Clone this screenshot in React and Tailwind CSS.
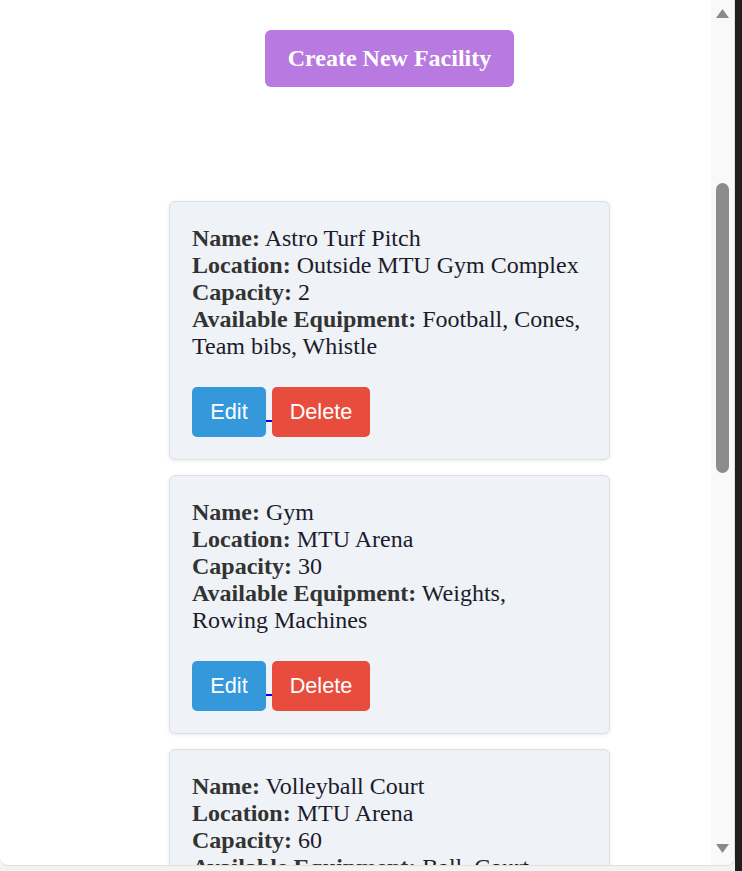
import React from "react";

const facilities = [
  { name: "Astro Turf Pitch", location: "Outside MTU Gym Complex", capacity: "2", equipment: "Football, Cones, Team bibs, Whistle" },
  { name: "Gym", location: "MTU Arena", capacity: "30", equipment: "Weights, Rowing Machines" },
  { name: "Volleyball Court", location: "MTU Arena", capacity: "60", equipment: "Ball, Court markers, Net" },
];

function Card({ f }) {
  return (
    <div className="w-[441px] shrink-0 rounded-[6px] border border-[#dcdfe4] bg-[#eff2f7] px-[22px] pt-[23px] pb-[22px] shadow-[0_1px_4px_rgba(0,0,0,0.08)]">
      <div className="text-[24px] leading-[27px] text-[#1b1b2b]" style={{ fontFamily: '"Liberation Serif", serif' }}>
        <div><strong className="text-[#333]">Name:</strong> {f.name}</div>
        <div><strong className="text-[#333]">Location:</strong> {f.location}</div>
        <div><strong className="text-[#333]">Capacity:</strong> {f.capacity}</div>
        <div><strong className="text-[#333]">Available Equipment:</strong> {f.equipment}</div>
      </div>
      <div className="mt-[27px] flex items-end" style={{ fontFamily: '"Liberation Sans", Arial, sans-serif' }}>
        <div className="flex h-[50px] w-[74px] items-center justify-center rounded-[5px] bg-[#3498db] text-[21.7px] text-white">Edit</div>
        <div className="mb-[15px] h-[2px] w-[6px] bg-[#0000ee]"></div>
        <div className="flex h-[50px] w-[98px] items-center justify-center rounded-[5px] bg-[#e74c3c] text-[21.7px] text-white">Delete</div>
      </div>
    </div>
  );
}

export default function App() {
  return (
    <div className="flex h-[871px] w-[742px] overflow-hidden bg-[#1f1f1f]">
      <div className="flex w-[735px] flex-col bg-[#f3f3f3]">
        <div className="flex h-[866px] overflow-hidden rounded-b-[8px] border-b border-r border-[#dedede] bg-white">
          <div className="flex w-[711px] flex-col items-center overflow-hidden pl-[68px] pt-[30px]">
            <div
              className="flex h-[57px] w-[249px] shrink-0 items-center justify-center rounded-[6px] bg-[#b879e0] pb-[2px] text-[24px] font-bold text-white"
              style={{ fontFamily: '"Liberation Serif", serif' }}
            >
              Create New Facility
            </div>
            <div className="mt-[114px] flex flex-col gap-[15px]">
              {facilities.map((f) => (
                <Card key={f.name} f={f} />
              ))}
            </div>
          </div>
          <div className="flex w-[23px] flex-col items-center bg-[#f9f9f9] pt-[9px]">
            <svg width="13" height="9" viewBox="0 0 13 9"><path d="M6.5 0 L13 9 L0 9 Z" fill="#8a8a8a" /></svg>
            <div className="mt-[165px] h-[290px] w-[13px] rounded-full bg-[#8c8c8c]"></div>
            <div className="flex-1"></div>
            <svg width="13" height="9" viewBox="0 0 13 9" className="mb-[12px]"><path d="M0 0 L13 0 L6.5 9 Z" fill="#8a8a8a" /></svg>
          </div>
        </div>
      </div>
    </div>
  );
}
